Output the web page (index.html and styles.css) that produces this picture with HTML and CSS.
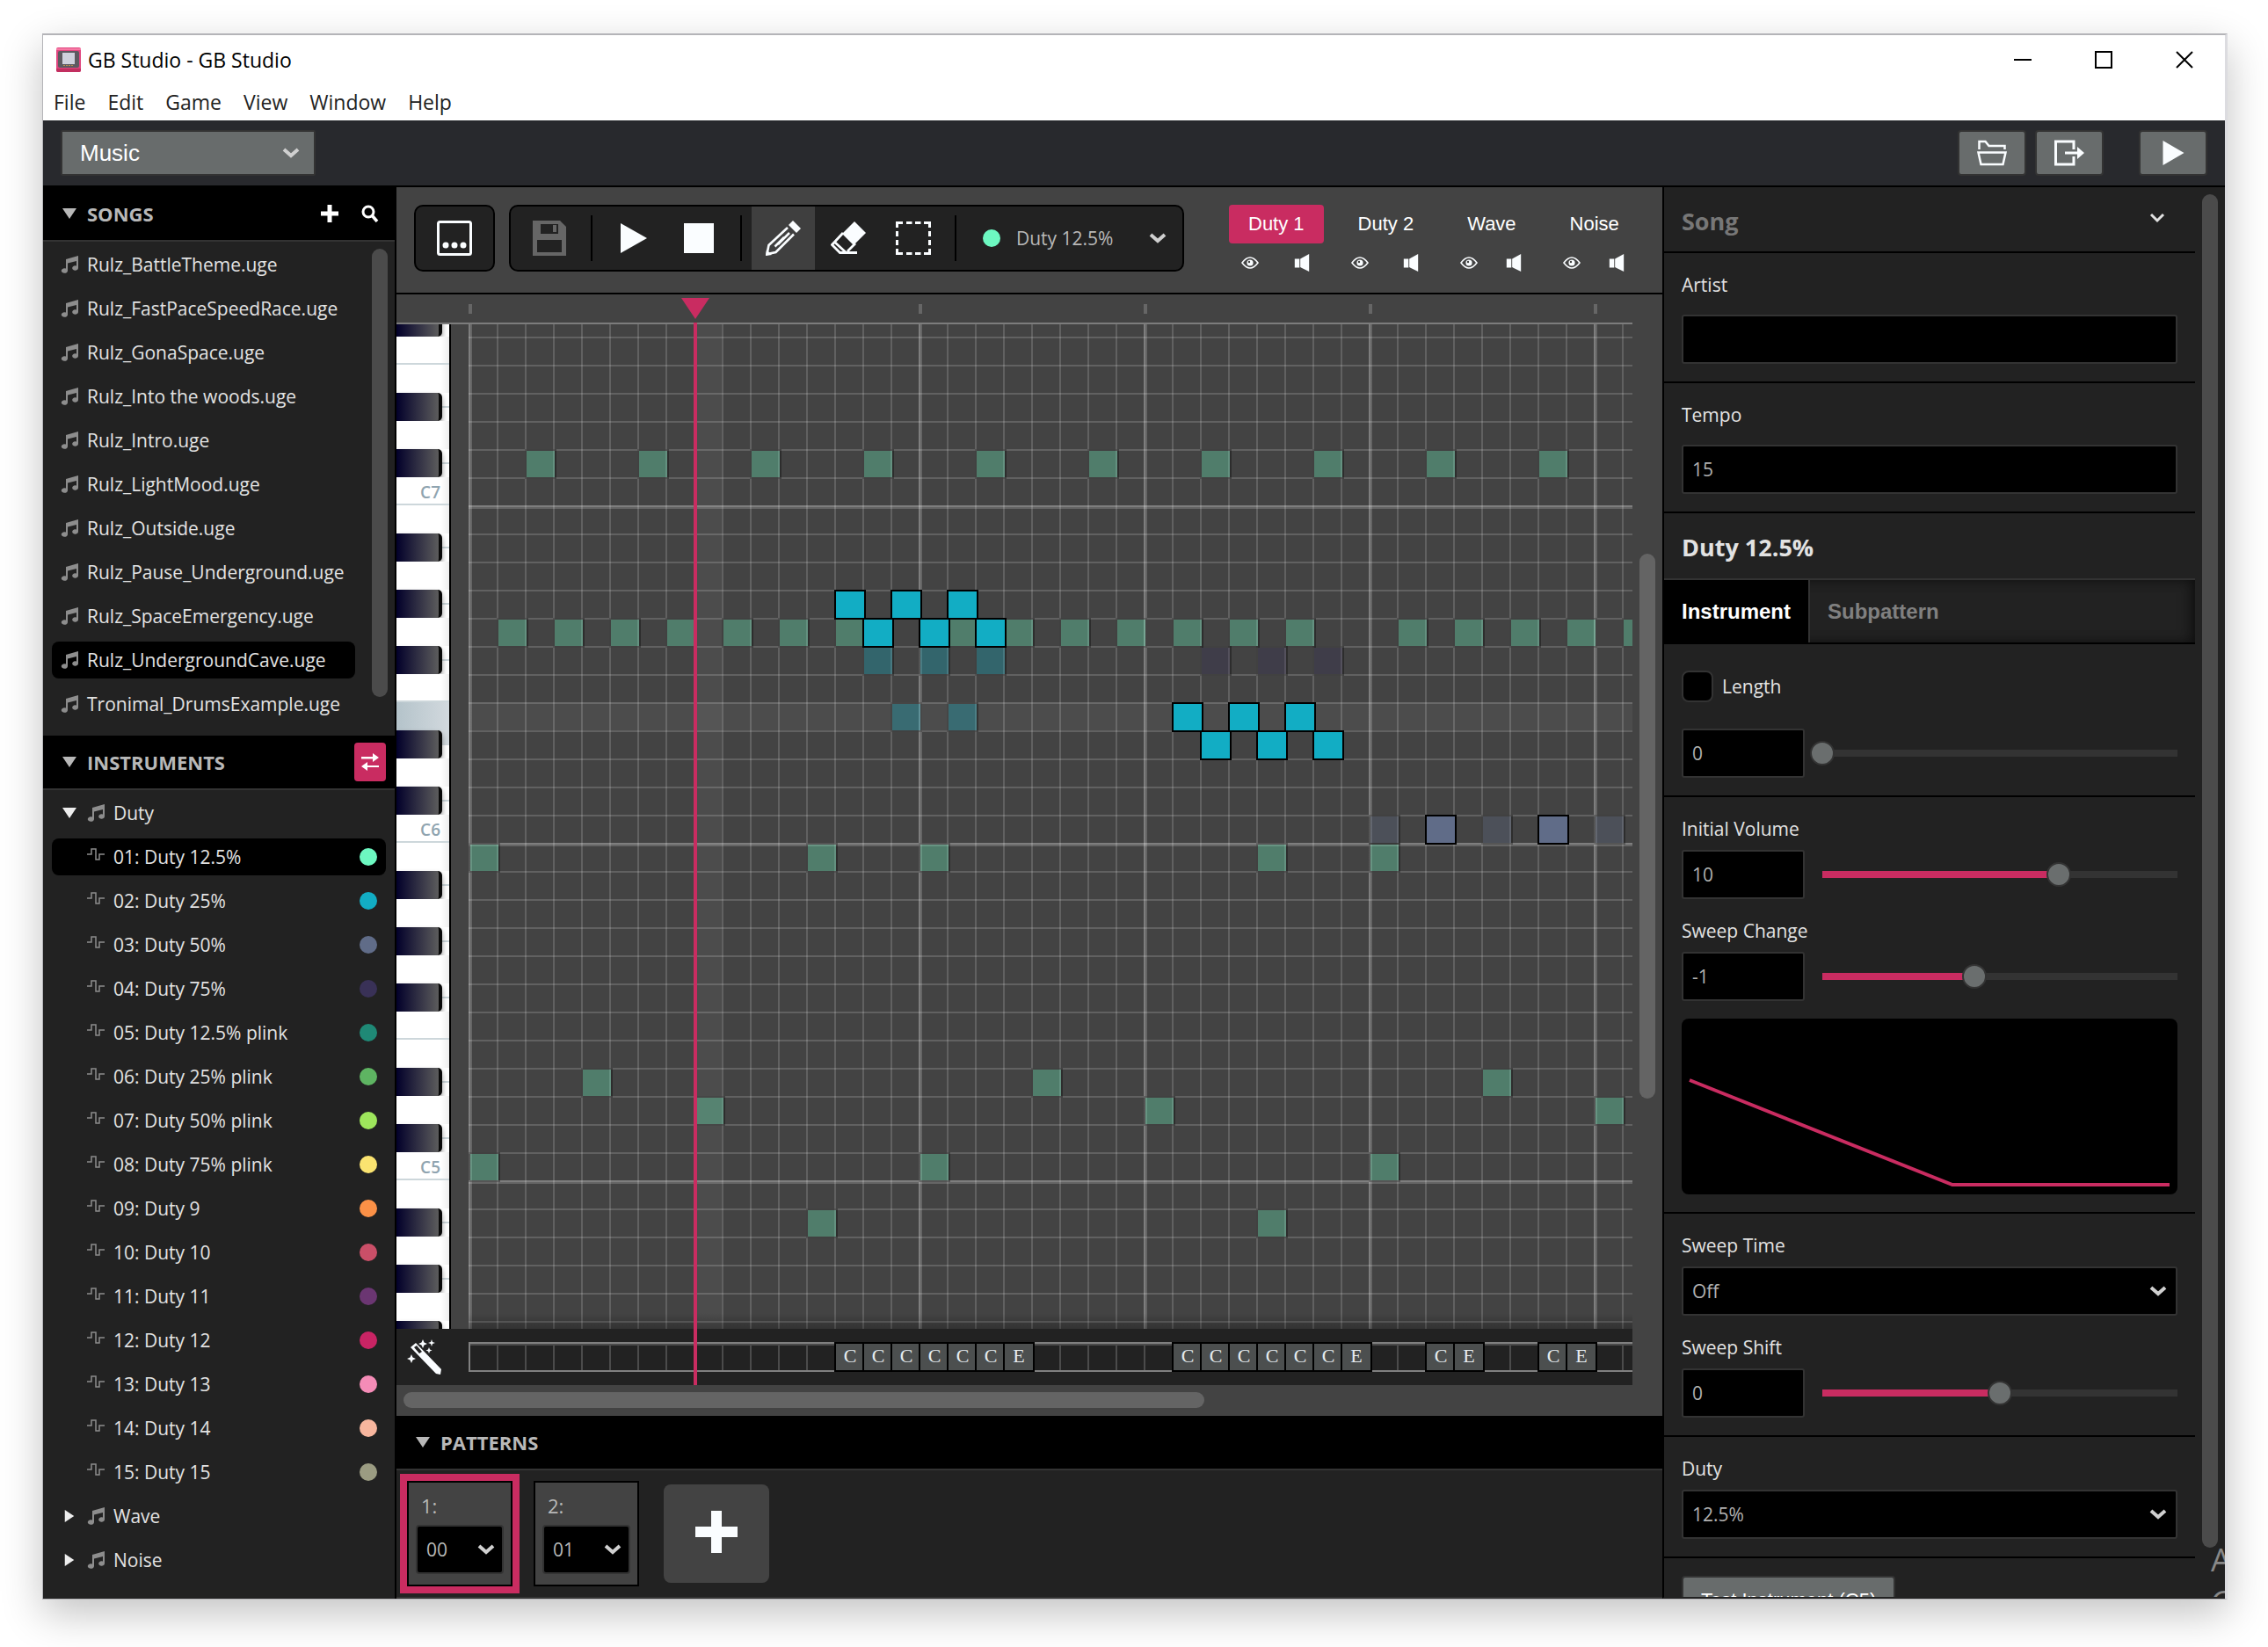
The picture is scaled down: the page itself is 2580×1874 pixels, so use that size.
FILE: index.html
```html
<!DOCTYPE html>
<html lang="en">
<head>
  <meta charset="UTF-8">
  <meta name="viewport" content="width=device-width, initial-scale=1.0">
  <title>GB Studio - GB Studio</title>
  <link rel="stylesheet" href="styles.css">
</head>
<body>
  <svg class="sprite" aria-hidden="true">
    <symbol id="note" viewBox="0 0 20 20"><path d="M6 4 20 0v14a3.4 2.8 0 1 1-2-2.600V6L8 8.600V17a3.600 2.800 0 1 1-2-2.500z"/></symbol>
    <symbol id="wave" viewBox="0 0 20 14"><path d="M0 7h5V1h5v12h4V7h6" fill="none" stroke="currentColor" stroke-width="1.500"/></symbol>
    <symbol id="down" viewBox="0 0 16 12"><path d="M0 0h16L8 12z"/></symbol>
    <symbol id="right" viewBox="0 0 12 16"><path d="M0 0v16l12-8z"/></symbol>
    <symbol id="plus" viewBox="0 0 20 20"><path d="M7.500 0h5v7.500H20v5h-7.500V20h-5v-7.500H0v-5h7.500z"/></symbol>
    <symbol id="play" viewBox="0 0 24 28"><path d="M0 0v28l24-14z"/></symbol>
    <symbol id="eye" viewBox="0 0 20 14"><path d="M1 7q9-12 18 0-9 12-18 0z" fill="none" stroke="currentColor" stroke-width="1.600"/><circle cx="10" cy="7" r="3.600"/><circle cx="9" cy="6" r="1.200" fill="#434343"/></symbol>
    <symbol id="speaker" viewBox="0 0 18 22"><path d="M0 6h6v11H0zM7 6l2-1 9-5v22l-9-4.500-2-1z"/></symbol>
  </svg>

  <div class="window">
    <header class="titlebar">
      <svg class="logo" viewBox="0 0 28 28"><rect width="28" height="28" rx="2" fill="#e0457f"/><rect y="1" width="28" height="2" fill="#f77aa5"/><path d="M0 24h28v2q0 2-3 2H3q-3 0-3-2z" fill="#c22f60"/><rect x="2" y="4" width="24" height="19" rx="2" fill="#5d5960"/><rect x="7" y="6" width="14" height="13" fill="#cfd0dc"/><path d="M8 20.500h12" stroke="#b8904f" stroke-dasharray="2 1"/></svg>
      <h1>GB Studio - GB Studio</h1>
      <div class="window-buttons">
        <button aria-label="Minimize"><svg viewBox="0 0 20 20"><path d="M0 10h20"/></svg></button>
        <button aria-label="Maximize"><svg viewBox="0 0 20 20"><path d="M1 1h18v18H1z"/></svg></button>
        <button aria-label="Close"><svg viewBox="0 0 20 20"><path d="m1 1 18 18M19 1 1 19"/></svg></button>
      </div>
    </header>
    <nav class="menu">
      <a href="#">File</a><a href="#">Edit</a><a href="#">Game</a><a href="#">View</a><a href="#">Window</a><a href="#">Help</a>
    </nav>

    <div class="app">
      <div class="app-bar">
        <select class="section-select" aria-label="Section"><option>Music</option></select>
        <button class="bar-button" aria-label="Open folder"><svg width="34" height="30" viewBox="0 0 34 30"><path d="M2.500 11V2h7l4 5h18v4M1.500 14.500h31l-3 13.500h-25z" fill="none" stroke="currentColor" stroke-width="2.500"/></svg></button>
        <button class="bar-button" aria-label="Export"><svg width="34" height="30" viewBox="0 0 34 30"><path d="M22 11V2H1.500v26H22V19" fill="none" stroke="currentColor" stroke-width="3"/><path d="M12 13.500h14V8l8 7-8 7v-5.500H12z"/></svg></button>
        <button class="bar-button run" aria-label="Play"><svg width="25" height="28"><use href="#play"/></svg></button>
      </div>

      <div class="columns">
        <aside class="sidebar">
          <div class="panel-header">
            <svg width="16" height="12"><use href="#down"/></svg>
            <h2>Songs</h2>
            <button aria-label="Add song"><svg width="20" height="20"><use href="#plus"/></svg></button>
            <button aria-label="Search"><svg width="20" height="20" viewBox="0 0 20 20"><circle cx="8" cy="8" r="6" fill="none" stroke="currentColor" stroke-width="3"/><path d="m12 12 6 7" stroke="currentColor" stroke-width="3.500"/></svg></button>
          </div>
          <div class="songs">
            <ul class="list">
              <li><a href="#"><svg><use href="#note"/></svg>Rulz_BattleTheme.uge</a></li>
              <li><a href="#"><svg><use href="#note"/></svg>Rulz_FastPaceSpeedRace.uge</a></li>
              <li><a href="#"><svg><use href="#note"/></svg>Rulz_GonaSpace.uge</a></li>
              <li><a href="#"><svg><use href="#note"/></svg>Rulz_Into the woods.uge</a></li>
              <li><a href="#"><svg><use href="#note"/></svg>Rulz_Intro.uge</a></li>
              <li><a href="#"><svg><use href="#note"/></svg>Rulz_LightMood.uge</a></li>
              <li><a href="#"><svg><use href="#note"/></svg>Rulz_Outside.uge</a></li>
              <li><a href="#"><svg><use href="#note"/></svg>Rulz_Pause_Underground.uge</a></li>
              <li><a href="#"><svg><use href="#note"/></svg>Rulz_SpaceEmergency.uge</a></li>
              <li><a href="#" class="selected"><svg><use href="#note"/></svg>Rulz_UndergroundCave.uge</a></li>
              <li><a href="#"><svg><use href="#note"/></svg>Tronimal_DrumsExample.uge</a></li>
            </ul>
            <div class="scroll scroll-songs"><span></span></div>
          </div>

          <div class="panel-header">
            <svg width="16" height="12"><use href="#down"/></svg>
            <h2>Instruments</h2>
            <button class="swap" aria-label="Swap view"><svg width="20" height="20" viewBox="0 0 20 20"><path d="M0 4h13V0l7 5-7 5V6.500H0zM20 14H7v-4l-7 5 7 5v-4h13z"/></svg></button>
          </div>
          <ul class="list instruments">
            <li><a href="#" class="group"><svg class="arrow"><use href="#down"/></svg><svg><use href="#note"/></svg>Duty</a></li>
            <li><a href="#" class="selected"><svg class="duty"><use href="#wave"/></svg>01: Duty 12.5%<i class="dot c1"></i></a></li>
            <li><a href="#"><svg class="duty"><use href="#wave"/></svg>02: Duty 25%<i class="dot c2"></i></a></li>
            <li><a href="#"><svg class="duty"><use href="#wave"/></svg>03: Duty 50%<i class="dot c3"></i></a></li>
            <li><a href="#"><svg class="duty"><use href="#wave"/></svg>04: Duty 75%<i class="dot c4"></i></a></li>
            <li><a href="#"><svg class="duty"><use href="#wave"/></svg>05: Duty 12.5% plink<i class="dot c5"></i></a></li>
            <li><a href="#"><svg class="duty"><use href="#wave"/></svg>06: Duty 25% plink<i class="dot c6"></i></a></li>
            <li><a href="#"><svg class="duty"><use href="#wave"/></svg>07: Duty 50% plink<i class="dot c7"></i></a></li>
            <li><a href="#"><svg class="duty"><use href="#wave"/></svg>08: Duty 75% plink<i class="dot c8"></i></a></li>
            <li><a href="#"><svg class="duty"><use href="#wave"/></svg>09: Duty 9<i class="dot c9"></i></a></li>
            <li><a href="#"><svg class="duty"><use href="#wave"/></svg>10: Duty 10<i class="dot c10"></i></a></li>
            <li><a href="#"><svg class="duty"><use href="#wave"/></svg>11: Duty 11<i class="dot c11"></i></a></li>
            <li><a href="#"><svg class="duty"><use href="#wave"/></svg>12: Duty 12<i class="dot c12"></i></a></li>
            <li><a href="#"><svg class="duty"><use href="#wave"/></svg>13: Duty 13<i class="dot c13"></i></a></li>
            <li><a href="#"><svg class="duty"><use href="#wave"/></svg>14: Duty 14<i class="dot c14"></i></a></li>
            <li><a href="#"><svg class="duty"><use href="#wave"/></svg>15: Duty 15<i class="dot c15"></i></a></li>
            <li><a href="#" class="group"><svg class="arrow"><use href="#right"/></svg><svg><use href="#note"/></svg>Wave</a></li>
            <li><a href="#" class="group"><svg class="arrow"><use href="#right"/></svg><svg><use href="#note"/></svg>Noise</a></li>
          </ul>
        </aside>

        <main class="editor">
          <div class="toolbar">
            <div class="tools view">
              <button aria-label="Piano view"><svg width="40" height="40" viewBox="0 0 40 40"><rect x="1.500" y="1.500" width="37" height="37" rx="2" fill="none" stroke="currentColor" stroke-width="3"/><circle cx="10" cy="28" r="3.500"/><circle cx="20" cy="28" r="3.500"/><circle cx="30" cy="28" r="3.500"/></svg></button>
            </div>
            <div class="tools">
              <button class="disabled" aria-label="Save"><svg width="38" height="40" viewBox="0 0 38 40"><path fill-rule="evenodd" d="M0 0h31l7 7v33H0zM9 4v11h20V4zM5 22v14h28V22z"/><path d="M23 5h4v8h-4z"/></svg></button>
              <hr>
              <button aria-label="Play song"><svg width="30" height="34" viewBox="0 0 30 34"><path d="M0 0v34l30-17z"/></svg></button>
              <button aria-label="Stop"><svg width="34" height="34" viewBox="0 0 34 34"><path d="M0 0h34v34H0z"/></svg></button>
              <hr>
              <button class="active" aria-label="Pencil"><svg width="40" height="40" viewBox="0 0 40 40"><path d="m31 0 9 9-5 5-9-9z"/><path d="M25 8 3.500 28 1.500 38l10-2L32 15.500M21 19 10.500 29.500M27 14 14 27" fill="none" stroke="currentColor" stroke-width="2.600"/><path d="m0 40 1-7 6 6z"/></svg></button>
              <button aria-label="Eraser"><svg width="40" height="38" viewBox="0 0 40 38"><path d="m27 0 13 13-14 14-13-13z"/><path d="m14 13-12.500 13.500 9 9H30M19 34l9-9M4.500 23.500 17 35" fill="none" stroke="currentColor" stroke-width="2.800"/></svg></button>
              <button aria-label="Select"><svg width="40" height="38" viewBox="0 0 40 38"><path d="M1.500 7V1.500H8M32 1.500h6.500V7M38.500 31v5.500H32M8 36.500H1.500V31M12 1.500h6.500M22 1.500h6.500M12 36.500h6.500M22 36.500h6.500M1.500 11v6M1.500 21v6M38.500 11v6M38.500 21v6" fill="none" stroke="currentColor" stroke-width="3"/></svg></button>
              <hr>
              <i class="dot c1"></i>
              <select class="tool-select" aria-label="Instrument"><option>Duty 12.5%</option></select>
            </div>
            <div class="channels">
              <div class="channel"><button class="name active">Duty 1</button><div class="toggles"><button aria-label="Show Duty 1"><svg width="20" height="14"><use href="#eye"/></svg></button><button aria-label="Mute Duty 1"><svg width="18" height="20"><use href="#speaker"/></svg></button></div></div>
              <div class="channel"><button class="name">Duty 2</button><div class="toggles"><button aria-label="Show Duty 2"><svg width="20" height="14"><use href="#eye"/></svg></button><button aria-label="Mute Duty 2"><svg width="18" height="20"><use href="#speaker"/></svg></button></div></div>
              <div class="channel"><button class="name">Wave</button><div class="toggles"><button aria-label="Show Wave"><svg width="20" height="14"><use href="#eye"/></svg></button><button aria-label="Mute Wave"><svg width="18" height="20"><use href="#speaker"/></svg></button></div></div>
              <div class="channel"><button class="name">Noise</button><div class="toggles"><button aria-label="Show Noise"><svg width="20" height="14"><use href="#eye"/></svg></button><button aria-label="Mute Noise"><svg width="18" height="20"><use href="#speaker"/></svg></button></div></div>
            </div>
          </div>

          <div class="roll">
            <div class="roll-main">
              <div class="ruler"></div>
              <div class="roll-body">
                <div class="piano" id="piano"></div>
                <div class="grid" id="grid">
                  <div class="hover-row"></div>
                  <div class="hover-column"></div>
                </div>
              </div>
              <div class="effects">
                <svg class="wand" viewBox="0 0 40 40"><path d="m4 9 6-5 29 30-1 6-5-1z"/><path d="m8 9 3-2 6 7-3 2z" fill="#222"/><path d="m18 0 1.500 3.500L23 5l-3.500 1.500L18 10l-1.500-3.500L13 5l3.500-1.500zM28 0l1 3 3 1-3 1-1 3-1-3-3-1 3-1zM25 9l1 2.500 2.500 1L26 13.500 25 16l-1-2.500-2.500-1 2.500-1zM5 17l1.500 3.500L10 22l-3.500 1.500L5 27l-1.500-3.500L0 22l3.500-1.500z"/></svg>
                <div class="effect-cells" id="effects"></div>
              </div>
              <div class="playhead"></div>
            </div>
            <div class="scroll scroll-roll"><span></span></div>
          </div>
          <div class="scroll-x"><span></span></div>

          <div class="panel-header">
            <svg width="16" height="12"><use href="#down"/></svg>
            <h2>Patterns</h2>
          </div>
          <div class="patterns">
            <div class="pattern active"><label for="p1">1:</label><select id="p1"><option>00</option></select></div>
            <div class="pattern"><label for="p2">2:</label><select id="p2"><option>01</option></select></div>
            <button class="add-pattern" aria-label="Add pattern"><svg width="48" height="48"><use href="#plus"/></svg></button>
          </div>
        </main>

        <aside class="properties">
          <div class="form">
            <div class="form-header song"><h2>Song</h2><button aria-label="Song menu"><svg width="18" height="12" viewBox="0 0 18 12"><path d="m2 2 7 7 7-7" fill="none" stroke="currentColor" stroke-width="3"/></svg></button></div>
            <div class="fields wide"><label for="artist">Artist</label><input type="text" id="artist"></div>
            <div class="fields wide"><label for="tempo">Tempo</label><input type="text" id="tempo" value="15"></div>
            <div class="form-header"><h2>Duty 12.5%</h2></div>
            <div class="tabs"><button class="active">Instrument</button><button>Subpattern</button></div>
            <div class="fields">
              <div class="check"><input type="checkbox" id="length-on"><label for="length-on">Length</label></div>
              <div class="slider"><input type="text" value="0" aria-label="Length value"><input type="range" min="0" max="63" value="0" aria-label="Length slider"></div>
            </div>
            <div class="fields">
              <label for="volume">Initial Volume</label>
              <div class="slider"><input type="text" id="volume" value="10"><input type="range" min="0" max="15" value="10" aria-label="Initial Volume slider"></div>
              <label for="change">Sweep Change</label>
              <div class="slider"><input type="text" id="change" value="-1"><input type="range" min="-7" max="7" value="-1" aria-label="Sweep Change slider"></div>
              <svg class="envelope" viewBox="0 0 564 200" preserveAspectRatio="none"><path d="M9 70 308 189H555" fill="none" stroke="#c92c61" stroke-width="4"/></svg>
            </div>
            <div class="fields">
              <label for="time">Sweep Time</label>
              <select id="time"><option>Off</option></select>
              <label for="shift">Sweep Shift</label>
              <div class="slider"><input type="text" id="shift" value="0"><input type="range" min="-7" max="7" value="0" aria-label="Sweep Shift slider"></div>
            </div>
            <div class="fields">
              <label for="duty">Duty</label>
              <select id="duty"><option>12.5%</option></select>
            </div>
            <div class="fields last"><button class="test">Test Instrument (C5)</button></div>
          </div>
          <div class="scroll scroll-form"><span></span></div>
          <div class="watermark">A<br>G</div>
        </aside>
      </div>
    </div>
  </div>
  <script src="script.js"></script>
</body>
</html>
```
FILE: styles.css
```css
*, *::before, *::after {
  box-sizing: border-box;
}
body {
  margin: 0;
  height: 100vh;
  padding: 38px 46px 54px 48px;
  background: #fff;
  color: #e2e2e2;
  font: 21px/32px "Open Sans", "Noto Sans", sans-serif;
}
button, select, input {
  margin: 0;
  padding: 0;
  border: 0;
  border-radius: 0;
  background: none;
  color: inherit;
  font: inherit;
}
button {
  display: flex;
  align-items: center;
  justify-content: center;
}
a {
  color: inherit;
  text-decoration: none;
}
h1, h2 {
  margin: 0;
  font-size: inherit;
}
svg {
  display: block;
  flex: none;
  fill: currentColor;
}
select {
  appearance: none;
  background: #000 url("data:image/svg+xml,%3Csvg xmlns='http://www.w3.org/2000/svg' width='20' height='14'%3E%3Cpath d='m2 3 8 7 8-7' fill='none' stroke='%23d0d0d0' stroke-width='4'/%3E%3C/svg%3E") no-repeat right 10px center;
}
.sprite {
  position: absolute;
  width: 0;
  height: 0;
}

/* window frame */
.window {
  display: flex;
  flex-direction: column;
  height: 100%;
  border: 1px solid #b4b4b8;
  border-top-width: 2px;
  border-right: 3px solid #dcdce0;
  box-shadow: 0 16px 44px rgba(0, 0, 0, .24);
  background: #fff;
}
.titlebar {
  display: flex;
  align-items: center;
  height: 56px;
  padding-left: 15px;
  color: #000;
}
.titlebar h1 {
  flex: 1;
  margin-left: 8px;
  font-size: 23px;
  font-weight: 400;
}
.logo {
  width: 28px;
  height: 28px;
}
.window-buttons {
  display: flex;
  align-self: stretch;
}
.window-buttons button {
  width: 92px;
}
.window-buttons svg {
  width: 20px;
  height: 20px;
  fill: none;
  stroke: #000;
  stroke-width: 2;
}
.menu {
  display: flex;
  gap: 25px;
  height: 41px;
  padding: 4px 12px;
  color: #222;
  font-size: 23px;
}
.app {
  display: flex;
  flex: 1;
  flex-direction: column;
  min-height: 0;
  background: #222;
}
.app-bar {
  display: flex;
  align-items: center;
  gap: 10px;
  height: 76px;
  padding: 0 20px;
  border-bottom: 2px solid #000;
  background: #28292d;
}
.section-select {
  width: 290px;
  height: 52px;
  margin-right: auto;
  padding-left: 20px;
  border: 2px solid #333;
  border-radius: 2px;
  background-color: #686c6c;
  background-position: right 16px center;
  color: #fff;
  font: 26px "Liberation Sans", Arial, sans-serif;
}
.bar-button {
  width: 78px;
  height: 52px;
  border: 2px solid #333;
  border-radius: 4px;
  background: #686c6c;
  color: #fafdff;
}
.bar-button.run {
  margin-left: 30px;
}
.columns {
  display: flex;
  flex: 1;
  min-height: 0;
}

/* shared */
.panel-header {
  display: flex;
  flex: none;
  align-items: center;
  height: 62px;
  padding: 0 10px 0 22px;
  border-bottom: 2px solid #333;
  background: #000;
  color: #b8b8b8;
}
.panel-header h2 {
  flex: 1;
  margin-left: 12px;
  font-size: 22px;
  text-transform: uppercase;
}
.panel-header button {
  width: 36px;
  height: 44px;
  margin-left: 10px;
  color: #fff;
}
.panel-header .swap {
  border-radius: 4px;
  background: #c92c61;
}
.scroll {
  display: grid;
}
.scroll span, .scroll-x span {
  border-radius: 9px;
  background: #4b4b4b;
}
.scroll span {
  grid-row: 2;
  width: 18px;
}
.dot {
  flex: none;
  width: 20px;
  height: 20px;
  border-radius: 50%;
}
.c1 { background: #6df8c1; }
.c2 { background: #12adc4; }
.c3 { background: #606c88; }
.c4 { background: #393157; }
.c5 { background: #1f8976; }
.c6 { background: #5eb462; }
.c7 { background: #9ee65c; }
.c8 { background: #fae370; }
.c9 { background: #fb9147; }
.c10 { background: #ca4f68; }
.c11 { background: #6b3672; }
.c12 { background: #c92464; }
.c13 { background: #f58cb7; }
.c14 { background: #f7b69e; }
.c15 { background: #9b9c82; }

/* left column */
.sidebar {
  flex: none;
  width: 402px;
  border-right: 2px solid #000;
  overflow: hidden;
}
.songs {
  display: flex;
  height: 562px;
}
.list {
  flex: 1;
  margin: 0;
  padding: 1px 10px;
  list-style: none;
}
.list li {
  height: 50px;
  padding: 4px 0;
}
.list a {
  display: flex;
  align-items: center;
  height: 42px;
  padding: 0 10px;
  border-radius: 8px;
  white-space: nowrap;
}
.list svg {
  width: 20px;
  height: 20px;
  margin-right: 10px;
  color: #8d8d8d;
}
.songs .list {
  padding-right: 19px;
}
.scroll-songs {
  width: 26px;
  grid-template-rows: 8fr 510fr 44fr;
}
.list .selected {
  background: #000;
}
.list .duty {
  height: 14px;
  margin: 0 10px 6px 30px;
}
.list .arrow {
  width: 16px;
  height: 14px;
  margin: 0 12px 0 2px;
  color: #eee;
}
.instruments .dot {
  margin-left: auto;
}

/* piano roll */
.editor {
  display: flex;
  flex: 1;
  flex-direction: column;
  min-width: 0;
  background: #434343;
}
.toolbar {
  display: flex;
  flex: none;
  height: 122px;
  padding: 20px;
  border-bottom: 2px solid #000;
}
.tools {
  display: flex;
  align-items: center;
  gap: 2px;
  height: 76px;
  padding: 0 8px;
  border: 2px solid #000;
  border-radius: 10px;
  background: #222;
}
.tools.view {
  margin-right: 16px;
}
.tools button {
  width: 72px;
  height: 72px;
  color: #fafdff;
}
.tools .disabled {
  color: #666;
}
.tools .active {
  background: #3f3f3f;
}
.tools hr {
  width: 2px;
  height: 52px;
  margin: 0 9px;
  border: 0;
  background: #000;
}
.tools .dot {
  margin: 0 16px 0 19px;
}
.tool-select {
  width: 181px;
  height: 60px;
  background-color: #222;
  color: #b8b8b8;
}
.channels {
  display: flex;
  gap: 17px;
  margin-left: 51px;
}
.channel .name {
  height: 44px;
  padding: 0 22px;
  border-radius: 4px;
  color: #fff;
  font: 22px "Liberation Sans", Arial, sans-serif;
  white-space: nowrap;
}
.channel .active {
  background: #c92c61;
}
.toggles {
  display: flex;
  justify-content: space-between;
  height: 44px;
  padding: 0 16px 0 14px;
  color: #fafdff;
}
.roll {
  display: flex;
  flex: 1;
  min-height: 0;
}
.roll-main {
  position: relative;
  display: flex;
  flex: 1;
  flex-direction: column;
  min-width: 0;
}
.ruler {
  flex: none;
  height: 34px;
  margin-left: 82px;
  background: repeating-linear-gradient(90deg, #666 0 4px, transparent 4px 256px) 0 11px / 100% 11px no-repeat;
}
.roll-body {
  display: flex;
  flex: 1;
  min-height: 0;
  margin-top: -2px;
  border-top: 2px solid #7c7c7c;
  overflow: hidden;
}
.piano {
  flex: none;
  width: 62px;
  margin-top: -18px;
  border-right: 2px solid #000;
}
.key {
  position: relative;
  height: 32px;
  background: linear-gradient(90deg, #fff 50px, #eee);
}
.key.edge {
  border-bottom: 2px solid #cdd7db;
}
.key.sharp {
  background: linear-gradient(#fff 15px, #cdd7db 15px 17px, #fff 17px);
}
.key.sharp::after {
  content: "";
  display: block;
  width: 52px;
  height: 32px;
  border-right: 4px solid #0a0a0a;
  border-radius: 0 5px 5px 0;
  background: linear-gradient(90deg, #02002a, #5c5c5c);
  box-shadow: 0 4px 6px rgba(0, 0, 0, .4);
}
.key.hover {
  background: linear-gradient(90deg, #b4c3ca, #d2d9de);
}
.key.hover + .sharp {
  background: linear-gradient(#d2d9de 17px, #fff 17px);
}
.key span {
  display: block;
  padding-right: 10px;
  color: #8fa4b0;
  font-size: 19px;
  font-weight: 600;
  line-height: 35px;
  text-align: right;
}
.grid {
  position: relative;
  flex: 1;
  min-width: 0;
  margin: -18px 0 0 20px;
  background:
    repeating-linear-gradient(90deg, rgba(255, 255, 255, .18) 0 4px, transparent 4px 256px),
    repeating-linear-gradient(90deg, rgba(255, 255, 255, .16) 0 2px, transparent 2px 32px),
    linear-gradient(rgba(255, 255, 255, .18) 4px, transparent 4px) 0 224px / 100% 384px,
    repeating-linear-gradient(rgba(255, 255, 255, .16) 0 2px, transparent 2px 32px);
  overflow: hidden;
}
.grid::after {
  content: "";
  position: absolute;
  inset: auto 0 0;
  height: 18px;
  background: linear-gradient(transparent, rgba(0, 0, 0, .25));
}
.hover-row {
  position: absolute;
  top: 448px;
  width: 100%;
  height: 32px;
  background: rgba(255, 255, 255, .05);
}
.hover-column {
  position: absolute;
  left: 256px;
  width: 32px;
  height: 100%;
  background: rgba(255, 255, 255, .05);
}
.note {
  position: absolute;
  width: 36px;
  height: 34px;
  border: 2px solid #000;
}
.note.ghost {
  opacity: .32;
}
.effects {
  display: flex;
  flex: none;
  align-items: center;
  height: 64px;
  padding-left: 12px;
  background: #222;
}
.wand {
  width: 40px;
  height: 40px;
  margin-right: 30px;
  color: #fafdff;
}
.effect-cells {
  position: relative;
  flex: 1;
  height: 34px;
  border: solid #808080;
  border-width: 2px 0;
  background: repeating-linear-gradient(90deg, #4b4b4b 0 2px, transparent 2px 32px);
  box-shadow: inset 2px 0 #808080, inset 0 2px #4b4b4b;
}
.effect {
  position: absolute;
  top: -2px;
  width: 36px;
  height: 34px;
  border: 2px solid #000;
  background: #4c4f4f;
  color: #e6ecef;
  font: 22px/28px "Liberation Serif", serif;
  text-align: center;
}
.playhead {
  position: absolute;
  top: 32px;
  bottom: 0;
  left: 338px;
  width: 4px;
  background: #c92c61;
}
.playhead::before {
  content: "";
  position: absolute;
  top: -28px;
  left: -14px;
  border: solid transparent;
  border-width: 24px 16px 0;
  border-top-color: #c92c61;
}
.scroll-roll {
  width: 34px;
  justify-content: center;
  grid-template-rows: 295fr 620fr 326fr;
}
.scroll-roll span, .scroll-x span {
  background: #646464;
}
.scroll-x {
  flex: none;
  height: 35px;
  padding: 8px;
}
.scroll-x span {
  display: block;
  width: 64%;
  height: 18px;
}

/* patterns */
.patterns {
  display: flex;
  flex: none;
  gap: 8px;
  height: 146px;
  padding: 4px;
  border-bottom: 2px solid #333;
  background: #222;
}
.pattern {
  display: flex;
  flex-direction: column;
  width: 136px;
  height: 136px;
  padding: 12px 10px;
  border: 8px solid transparent;
  background: #434343 padding-box;
  box-shadow: inset 0 0 0 2px #000;
  color: #b8b8b8;
  font-size: 22px;
}
.pattern.active {
  border-color: #c92c61;
}
.pattern label {
  padding-left: 6px;
}
.pattern select {
  height: 56px;
  margin-top: 6px;
  padding-left: 10px;
  border: 2px solid #333;
  border-radius: 4px;
  background-position: right 8px center;
  font-size: 21px;
}
.add-pattern {
  width: 120px;
  height: 112px;
  margin: 12px;
  padding-bottom: 4px;
  border-radius: 8px;
  background: #434343;
  color: #fafdff;
}

/* right column */
.properties {
  position: relative;
  display: flex;
  flex: none;
  width: 640px;
  border-left: 2px solid #000;
  border-bottom: 2px solid #222;
  overflow: hidden;
}
.form {
  flex: 1;
}
.form-header {
  display: flex;
  align-items: center;
  justify-content: space-between;
  height: 74px;
  padding: 4px 34px 0 20px;
  font-size: 27px;
}
.song {
  height: 75px;
  border-bottom: 2px solid #000;
}
.song h2 {
  color: #777;
}
.song button {
  height: 40px;
  padding-bottom: 8px;
}
.fields {
  display: flex;
  flex-direction: column;
  padding: 20px;
  border-bottom: 2px solid #000;
}
.fields > label {
  margin-bottom: 8px;
}
.fields.wide > label {
  margin-bottom: 18px;
}
.fields.last {
  border: 0;
}
.fields input[type="text"], .fields select {
  width: 100%;
  height: 56px;
  padding: 0 10px;
  border: 2px solid #333;
  border-radius: 3px;
  background-color: #000;
  color: #b0b0b0;
}
.fields > * + label {
  margin-top: 20px;
}
.check {
  display: flex;
  align-items: center;
  height: 56px;
  margin-bottom: 20px;
}
.check input {
  width: 36px;
  height: 36px;
  margin-right: 10px;
  border: 2px solid #333;
  border-radius: 8px;
  background: #000;
  appearance: none;
}
.slider {
  display: flex;
  align-items: center;
}
.slider input[type="text"] {
  flex: none;
  width: 140px;
}
.slider input[type="range"] {
  --fill: 0%;
  flex: 1;
  min-width: 0;
  height: 28px;
  margin: 0 -14px 0 6px;
  background: linear-gradient(90deg, #c92c61 var(--fill), #333 var(--fill)) center / calc(100% - 28px) 8px no-repeat;
  appearance: none;
}
.slider input[type="range"]::-webkit-slider-thumb {
  width: 28px;
  height: 28px;
  border: 2px solid #333;
  border-radius: 50%;
  background: #6a6e6e;
  appearance: none;
}
.envelope {
  width: 100%;
  height: 200px;
  margin-top: 20px;
  border-radius: 8px;
  background: #000;
}
.tabs {
  display: flex;
  height: 75px;
  border-top: 2px solid #333;
  border-bottom: 2px solid #000;
  box-shadow: inset -8px 0 16px -4px rgba(0, 0, 0, .45), inset 0 0 14px rgba(0, 0, 0, .3);
}
.tabs button {
  padding: 0 20px;
  color: #808080;
  font: bold 24px "Liberation Sans", Arial, sans-serif;
}
.tabs .active {
  border-right: 2px solid #333;
  background: #000;
  color: #fff;
}
.test {
  align-self: flex-start;
  height: 56px;
  padding: 0 20px;
  border: 2px solid #333;
  border-radius: 4px;
  background: #686c6c;
  color: #fff;
  font: 22px "Liberation Sans", Arial, sans-serif;
}
.scroll-form {
  width: 34px;
  justify-content: center;
  grid-template-rows: 8fr 1541fr 56fr;
}
.watermark {
  position: absolute;
  top: 1538px;
  left: 622px;
  color: #888;
  font-size: 36px;
  line-height: 48px;
}
```
FILE: script.js
```js
const CELL = 32;
const ROWS = 37;
// white/black pattern going down from F#
const KEYS = ['F#', 'F', 'E', 'D#', 'D', 'C#', 'C', 'B', 'A#', 'A', 'G#', 'G'];

// [row, columns, instrument, ghost]
const NOTES = [
  [5, [2, 6, 10, 14, 18, 22, 26, 30, 34, 38], 1, true],
  [11, [1, 3, 5, 7, 9, 11, 13, 17, 19, 21, 23, 25, 27, 29, 33, 35, 37, 39, 41], 1, true],
  [12, [14, 16, 18], 2, true],
  [12, [26, 28, 30], 4, true],
  [14, [15, 17], 2, true],
  [18, [32, 36, 40], 3, true],
  [19, [0, 12, 16, 28, 32], 1, true],
  [27, [4, 20, 36], 1, true],
  [28, [8, 24, 40], 1, true],
  [30, [0, 16, 32], 1, true],
  [32, [12, 28], 1, true],
  [10, [13, 15, 17], 2, false],
  [11, [14, 16, 18], 2, false],
  [14, [25, 27, 29], 2, false],
  [15, [26, 28, 30], 2, false],
  [18, [34, 38], 3, false]
];

const EFFECTS = [[13, 'CCCCCCE'], [25, 'CCCCCCE'], [34, 'CE'], [38, 'CE']];

const piano = document.getElementById('piano');
let octave = 7;
for (let i = 0; i < ROWS; i++) {
  const name = KEYS[i % 12];
  const key = document.createElement('div');
  key.className = 'key';
  if (name.includes('#')) key.classList.add('sharp');
  if (name === 'C' || name === 'F') key.classList.add('edge');
  if (i === 14) key.classList.add('hover');
  if (name === 'C') {
    key.innerHTML = `<span>C${octave}</span>`;
    octave--;
  }
  piano.appendChild(key);
}

const grid = document.getElementById('grid');
for (const [row, columns, instrument, ghost] of NOTES) {
  for (const column of columns) {
    const note = document.createElement('div');
    note.className = `note c${instrument}${ghost ? ' ghost' : ''}`;
    note.style.left = `${column * CELL}px`;
    note.style.top = `${row * CELL}px`;
    grid.appendChild(note);
  }
}

const effects = document.getElementById('effects');
for (const [start, codes] of EFFECTS) {
  [...codes].forEach((code, i) => {
    const cell = document.createElement('div');
    cell.className = 'effect';
    cell.textContent = code;
    cell.style.left = `${(start + i) * CELL}px`;
    effects.appendChild(cell);
  });
}

document.querySelectorAll('input[type="range"]').forEach((input) => {
  const update = () => {
    const value = (input.value - input.min) / (input.max - input.min);
    input.style.setProperty('--fill', `${value * 100}%`);
  };
  input.addEventListener('input', update);
  update();
});
```
